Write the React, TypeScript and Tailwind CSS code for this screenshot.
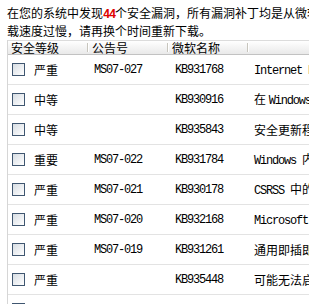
import React from "react";

type Patch = { level: string; bulletin: string; kb: string; name: string };

const patches: Patch[] = [
  { level: "严重", bulletin: "MS07-027", kb: "KB931768", name: "Internet Explorer 累积安全更新" },
  { level: "中等", bulletin: "", kb: "KB930916", name: "在 Windows XP 中的更新" },
  { level: "中等", bulletin: "", kb: "KB935843", name: "安全更新程序" },
  { level: "重要", bulletin: "MS07-022", kb: "KB931784", name: "Windows 内核中的漏洞" },
  { level: "严重", bulletin: "MS07-021", kb: "KB930178", name: "CSRSS 中的漏洞" },
  { level: "严重", bulletin: "MS07-020", kb: "KB932168", name: "Microsoft Agent 中的漏洞" },
  { level: "严重", bulletin: "MS07-019", kb: "KB931261", name: "通用即插即用中的漏洞" },
  { level: "严重", bulletin: "", kb: "KB935448", name: "可能无法启动计算机" },
  { level: "严重", bulletin: "", kb: "", name: "日域出现问题" },
];

const mono = "font-['Liberation_Mono',monospace] tracking-[-1.2px]";

const HeaderCell: React.FC<{ label: string; width: string; divider?: boolean }> = ({ label, width, divider = true }) => (
  <div className={`relative shrink-0 flex items-center h-full ${width}`}>
    <span className="pl-[3px]">{label}</span>
    {divider && (
      <div className="absolute right-0 top-[2px] bottom-[2px] flex">
        <div className="w-px bg-[#c7c5bd]" />
        <div className="w-px bg-white" />
      </div>
    )}
  </div>
);

const Checkbox: React.FC = () => (
  <div className="shrink-0 w-[13px] h-[13px] border border-[#3f5670] bg-gradient-to-br from-[#d7dde3] to-white" />
);

const App: React.FC = () => {
  return (
    <div className="w-[309px] h-[304px] overflow-hidden bg-white text-[12px] text-black font-['Noto_Sans_CJK_SC','Noto_Sans',sans-serif]">
      <div className="pt-[5px] pl-[7px] leading-[15px]">
        <div className="whitespace-nowrap">
          在您的系统中发现<span className={`text-[#e00000] font-bold ${mono}`}>44</span>个安全漏洞，所有漏洞补丁均是从微软官方网站下载，如果下
        </div>
        <div className="whitespace-nowrap">载速度过慢，请再换个时间重新下载。</div>
      </div>

      <div className="mt-[2px] ml-[7px] w-[400px] border-l border-[#d6d6d6]">
        <div className="flex h-[15px] border-t border-[#dcdcdc] border-b border-b-[#c2c2c2] bg-gradient-to-b from-white to-[#e9e9e9] leading-[14px]">
          <HeaderCell label="安全等级" width="w-[81px]" />
          <HeaderCell label="公告号" width="w-[80px]" />
          <HeaderCell label="微软名称" width="w-[80px]" />
          <HeaderCell label="" width="w-[80px]" />
        </div>

        {patches.map((p, i) => (
          <div key={i} className="flex items-center h-[30px] border-b border-[#e3e3e3]">
            <div className="w-[81px] shrink-0 flex items-center pl-[4px] gap-[9px]">
              <Checkbox />
              <span>{p.level}</span>
            </div>
            <div className={`w-[80px] shrink-0 pl-[5px] ${mono}`}>{p.bulletin}</div>
            <div className={`w-[80px] shrink-0 pl-[6px] ${mono}`}>{p.kb}</div>
            <div className="shrink-0 pl-[5px] whitespace-nowrap">
              {p.name.split(/([A-Za-z][A-Za-z ]*)/).map((part, j) =>
                /[A-Za-z]/.test(part) ? (
                  <span key={j} className={mono}>{part}</span>
                ) : (
                  <span key={j}>{part}</span>
                )
              )}
            </div>
          </div>
        ))}
      </div>
    </div>
  );
};

export default App;
